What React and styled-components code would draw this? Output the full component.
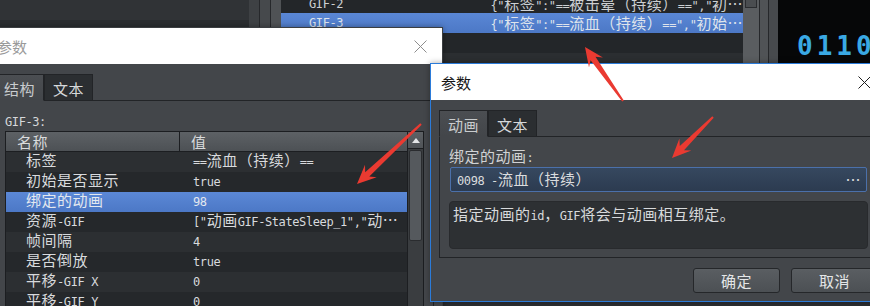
import React from 'react';
import styled, { createGlobalStyle } from 'styled-components';

const GlobalStyle = createGlobalStyle`
  html, body { margin: 0; padding: 0; background: #2b2e31; }
  body {
    font-family: "DejaVu Sans Mono", "Noto Sans CJK SC", monospace;
    font-size: 12px;
    letter-spacing: -0.4px;
    color: #cfd2d5;
  }
`;

// CJK runs are drawn a size up, the way the original UI mixes its fonts
const HAN = /([\u2026\u3000-\u303f\u3400-\u9fff\uff00-\uffef]+)/;

function Mixed({ text }) {
  return text.split(HAN).map((part, i) => (i % 2 ? <Han key={i}>{part}</Han> : part));
}

const Han = styled.span`
  font-family: "Noto Sans CJK SC", sans-serif;
  font-size: 15px;
  letter-spacing: 0.5px;
  line-height: 1;
`;

const properties = [
  ['标签', '==流血（持续）=='],
  ['初始是否显示', 'true'],
  ['绑定的动画', '98'],
  ['资源-GIF', '["动画GIF-StateSleep_1","动…'],
  ['帧间隔', '4'],
  ['是否倒放', 'true'],
  ['平移-GIF X', '0'],
  ['平移-GIF Y', '0'],
];

const arrows = [
  [421, 124, 357, 184],
  [713, 117, 672, 158],
  [623, 101, 585, 47],
];

function arrowPoints([tx, ty, px, py]) {
  const dx = px - tx;
  const dy = py - ty;
  const len = Math.hypot(dx, dy);
  const ux = dx / len;
  const uy = dy / len;
  const at = (d, o) => [px - ux * d - uy * o, py - uy * d + ux * o];
  const pts = [at(len, 1), at(14, 3), at(19, 8.5), [px, py], at(19, -8.5), at(14, -3), at(len, -1)];
  return pts.map((p) => p.map((v) => v.toFixed(1)).join(',')).join(' ');
}

export default function App() {
  return (
    <>
      <GlobalStyle />
      <Desktop>
        <Backdrop>
          <SidePanel />
          <Stripes>
            <Stripe $tone="#3e4144" />
            <Stripe $tone="#46494c" />
            <Stripe $tone="#4f5255" />
          </Stripes>
          <ListPanel>
            <ListBody>
              <ListRow>
                <ListName>GIF-2</ListName>
                <ListJson><Mixed text={'{"标签":"==被击晕（持续）==","初…'} /></ListJson>
              </ListRow>
              <ListRow $selected>
                <ListName>GIF-3</ListName>
                <ListJson><Mixed text={'{"标签":"==流血（持续）==","初始…'} /></ListJson>
              </ListRow>
            </ListBody>
            <ListBand />
          </ListPanel>
          <Stripes>
            <Stripe $tone="#5a5d60" $w={16}><Knob /></Stripe>
            <Stripe $tone="#505356" $w={8} />
            <Stripe $tone="#474a4d" $w={9} />
          </Stripes>
          <Lcd>0110</Lcd>
        </Backdrop>

        <Window $x={-14} $y={27} $h={300}>
          <TitleBar>
            <TitleText>参数</TitleText>
            <CloseIcon color="#8d8d8d" />
          </TitleBar>
          <Body>
            <TabRow>
              <Tab $active>结构</Tab>
              <Tab>文本</Tab>
            </TabRow>
            <TreePane>
              <Caption>GIF-3:</Caption>
              <Table>
                <Grid>
                  <Head>
                    <HeadCell $w={174} $divider><Han>名称</Han></HeadCell>
                    <HeadCell><Han>值</Han></HeadCell>
                  </Head>
                  {properties.map(([name, value], i) => (
                    <Row key={name} $dark={i % 2 === 0} $selected={i === 2}>
                      <NameCell><Mixed text={name} /></NameCell>
                      <ValueCell><Mixed text={value} /></ValueCell>
                    </Row>
                  ))}
                </Grid>
                <ScrollBar>
                  <ScrollUp>
                    <svg width="8" height="5" viewBox="0 0 8 5"><path d="M0 5 L4 0 L8 5 Z" fill="#e4e6e8" /></svg>
                  </ScrollUp>
                  <ScrollThumb />
                </ScrollBar>
              </Table>
            </TreePane>
          </Body>
        </Window>

        <Window $x={430} $y={63} $h={239} $active>
          <TitleBar $active>
            <TitleText $active>参数</TitleText>
            <CloseIcon color="#1e1e1e" />
          </TitleBar>
          <Body $bottom={8}>
            <TabRow>
              <Tab $active>动画</Tab>
              <Tab>文本</Tab>
            </TabRow>
            <FormPane>
              <FieldLabel><Mixed text="绑定的动画:" /></FieldLabel>
              <Picker>
                <span><Mixed text="0098 -流血（持续）" /></span>
                <Han>…</Han>
              </Picker>
              <HelpBox><Mixed text="指定动画的id，GIF将会与动画相互绑定。" /></HelpBox>
            </FormPane>
            <ButtonRow>
              <Button>确定</Button>
              <Button>取消</Button>
            </ButtonRow>
          </Body>
        </Window>

        <Overlay viewBox="0 0 870 306">
          {arrows.map((a, i) => (
            <polygon key={i} points={arrowPoints(a)} fill="#ea3a31" />
          ))}
        </Overlay>
      </Desktop>
    </>
  );
}

function CloseIcon({ color }) {
  return (
    <svg width="13" height="13" viewBox="0 0 13 13">
      <path d="M0.5 0.5 L12.5 12.5 M12.5 0.5 L0.5 12.5" stroke={color} strokeWidth="1" fill="none" />
    </svg>
  );
}

const Desktop = styled.div`
  position: relative;
  width: 870px;
  height: 306px;
  overflow: hidden;
  background: #2b2e31;
`;

const Backdrop = styled.div`
  display: flex;
  height: 63px;
`;

const SidePanel = styled.div`
  width: 249px;
  background: linear-gradient(#303336 0 20px, #2a2d30 20px 28px, #2b2e31 28px);
`;

const Stripes = styled.div`
  display: flex;
  gap: 1px;
  background: #26282b;
`;

const Stripe = styled.div`
  width: ${(p) => p.$w || 10}px;
  background: ${(p) => p.$tone};
`;

const Knob = styled.div`
  height: 7px;
  margin: 0 2px;
  border: 1px solid #2a2c2f;
  border-top: none;
  background: #4a4d50;
`;

const ListPanel = styled.div`
  width: 462px;
  display: flex;
  flex-direction: column;
  background: #232629;
`;

const ListBody = styled.div`
  flex: 1;
  margin-top: -5px;
`;

const ListRow = styled.div`
  display: flex;
  align-items: center;
  height: ${(p) => (p.$selected ? 20 : 18)}px;
  white-space: nowrap;
  color: ${(p) => (p.$selected ? '#dfe4ec' : '#cdd0d3')};
  background: ${(p) => (p.$selected ? 'linear-gradient(#5a87d5, #4c78c6)' : 'transparent')};
`;

const ListName = styled.div`
  width: 184px;
  padding-left: 28px;
`;

const ListJson = styled.div`
  padding-left: 0;
`;

const ListBand = styled.div`
  height: 10px;
  background: #2b2e31;
`;

const Lcd = styled.div`
  flex: 1;
  background: #060708;
  padding: 33px 0 0 19px;
  font-family: "DejaVu Sans Mono", monospace;
  font-weight: bold;
  font-size: 26px;
  line-height: 26px;
  letter-spacing: 4px;
  white-space: nowrap;
  overflow: hidden;
  color: #3aa9e4;
`;

const Window = styled.div`
  position: absolute;
  left: ${(p) => p.$x}px;
  top: ${(p) => p.$y}px;
  width: 457px;
  height: ${(p) => p.$h}px;
  box-sizing: border-box;
  display: flex;
  flex-direction: column;
  background: #43464a;
  border: 1px solid ${(p) => (p.$active ? '#2b7bd9' : '#3b3e41')};
  box-shadow: 0 0 6px rgba(0, 0, 0, 0.35);
`;

const TitleBar = styled.div`
  height: 36px;
  flex: none;
  display: flex;
  align-items: center;
  justify-content: space-between;
  padding: 0 15px 0 10px;
  background: #ffffff;
`;

const TitleText = styled.span`
  font-family: "Noto Sans CJK SC", sans-serif;
  font-size: 15px;
  letter-spacing: 0;
  color: ${(p) => (p.$active ? '#161616' : '#9a9a9a')};
`;

const Body = styled.div`
  flex: 1;
  min-height: 0;
  display: flex;
  flex-direction: column;
  padding: 10px 8px ${(p) => p.$bottom || 0}px;
`;

const TabRow = styled.div`
  display: flex;
  height: 26px;
  flex: none;
`;

const Tab = styled.div`
  position: relative;
  z-index: 1;
  box-sizing: border-box;
  width: 49px;
  height: 27px;
  display: flex;
  align-items: center;
  justify-content: center;
  padding-top: 1px;
  border: 1px solid #222427;
  border-bottom-color: ${(p) => (p.$active ? '#43464a' : '#222427')};
  background: ${(p) => (p.$active ? 'linear-gradient(#4b4e52, #43464a)' : '#2b2e31')};
  font-family: "Noto Sans CJK SC", sans-serif;
  font-size: 15px;
  letter-spacing: 0.5px;
  color: ${(p) => (p.$active ? '#c9ccce' : '#d6d8da')};
`;

const Pane = styled.div`
  border: 1px solid #222427;
  background: #43464a;
`;

const TreePane = styled(Pane)`
  flex: 1;
  min-height: 0;
  display: flex;
  flex-direction: column;
  padding: 13px 9px 0;
`;

const Caption = styled.div`
  line-height: 17px;
  height: 17px;
  color: #d6d8da;
`;

const Table = styled.div`
  flex: 1;
  min-height: 0;
  display: flex;
  border: 1px solid #1c1e21;
  border-bottom: none;
  overflow: hidden;
`;

const Grid = styled.div`
  flex: 1;
  display: flex;
  flex-direction: column;
  background: #2b2e31;
`;

const Head = styled.div`
  display: flex;
  height: 20px;
  flex: none;
  box-sizing: border-box;
  border-bottom: 1px solid #1c1e21;
  background: linear-gradient(#5d6165, #4d5155);
  color: #d9dbdd;
`;

const HeadCell = styled.div`
  display: flex;
  align-items: center;
  ${(p) => (p.$w ? `width: ${p.$w}px; flex: none;` : 'flex: 1;')}
  padding-left: 11px;
  box-sizing: border-box;
  border-right: ${(p) => (p.$divider ? '1px solid #1c1e21' : 'none')};
`;

const Row = styled.div`
  display: flex;
  align-items: center;
  height: 20px;
  flex: none;
  white-space: nowrap;
  line-height: 20px;
  background: ${(p) =>
    p.$selected ? 'linear-gradient(#5b88d6, #4c78c6)' : p.$dark ? '#2c2f32' : '#25282b'};
  color: ${(p) => (p.$selected ? '#e3e8ef' : '#d8dadd')};
`;

const NameCell = styled.div`
  width: 175px;
  flex: none;
  box-sizing: border-box;
  padding-left: 20px;
`;

const ValueCell = styled.div`
  padding-left: 12px;
`;

const ScrollBar = styled.div`
  width: 15px;
  flex: none;
  display: flex;
  flex-direction: column;
  background: #3a3d40;
  border-left: 1px solid #1c1e21;
`;

const ScrollUp = styled.div`
  height: 16px;
  flex: none;
  display: flex;
  align-items: center;
  justify-content: center;
  background: linear-gradient(#5d6165, #4f5357);
  border-bottom: 1px solid #1c1e21;
`;

const ScrollThumb = styled.div`
  height: 89px;
  margin: 1px 1px 0;
  border: 1px solid #2a2c2f;
  border-radius: 2px;
  background: #55595d;
`;

const FormPane = styled(Pane)`
  display: flex;
  flex-direction: column;
  padding: 11px 9px 8px;
`;

const FieldLabel = styled.div`
  line-height: 18px;
  height: 18px;
  color: #d0d2d4;
`;

const Picker = styled.div`
  height: 25px;
  margin: 1px 1px 0;
  box-sizing: border-box;
  display: flex;
  align-items: center;
  justify-content: space-between;
  padding: 0 5px 0 6px;
  border: 1px solid #4b70aa;
  border-radius: 2px;
  background: linear-gradient(#36485f, #2c3b50);
  color: #dadcde;
  white-space: nowrap;
`;

const HelpBox = styled.div`
  height: 48px;
  margin-top: 9px;
  box-sizing: border-box;
  padding: 4px 3px;
  line-height: 20px;
  border: 1px solid #282a2d;
  border-radius: 4px;
  background: #2d3033;
  color: #d8dadc;
  white-space: nowrap;
`;

const ButtonRow = styled.div`
  display: flex;
  justify-content: flex-end;
  gap: 11px;
  margin-top: 10px;
`;

const Button = styled.div`
  width: 87px;
  height: 25px;
  box-sizing: border-box;
  display: flex;
  align-items: center;
  justify-content: center;
  border: 1px solid #25272a;
  border-radius: 3px;
  background: linear-gradient(#5a5e62, #4c5054);
  font-family: "Noto Sans CJK SC", sans-serif;
  font-size: 15px;
  letter-spacing: 0.5px;
  color: #e4e6e8;
`;

const Overlay = styled.svg`
  position: absolute;
  left: 0;
  top: 0;
  width: 870px;
  height: 306px;
  pointer-events: none;
`;
